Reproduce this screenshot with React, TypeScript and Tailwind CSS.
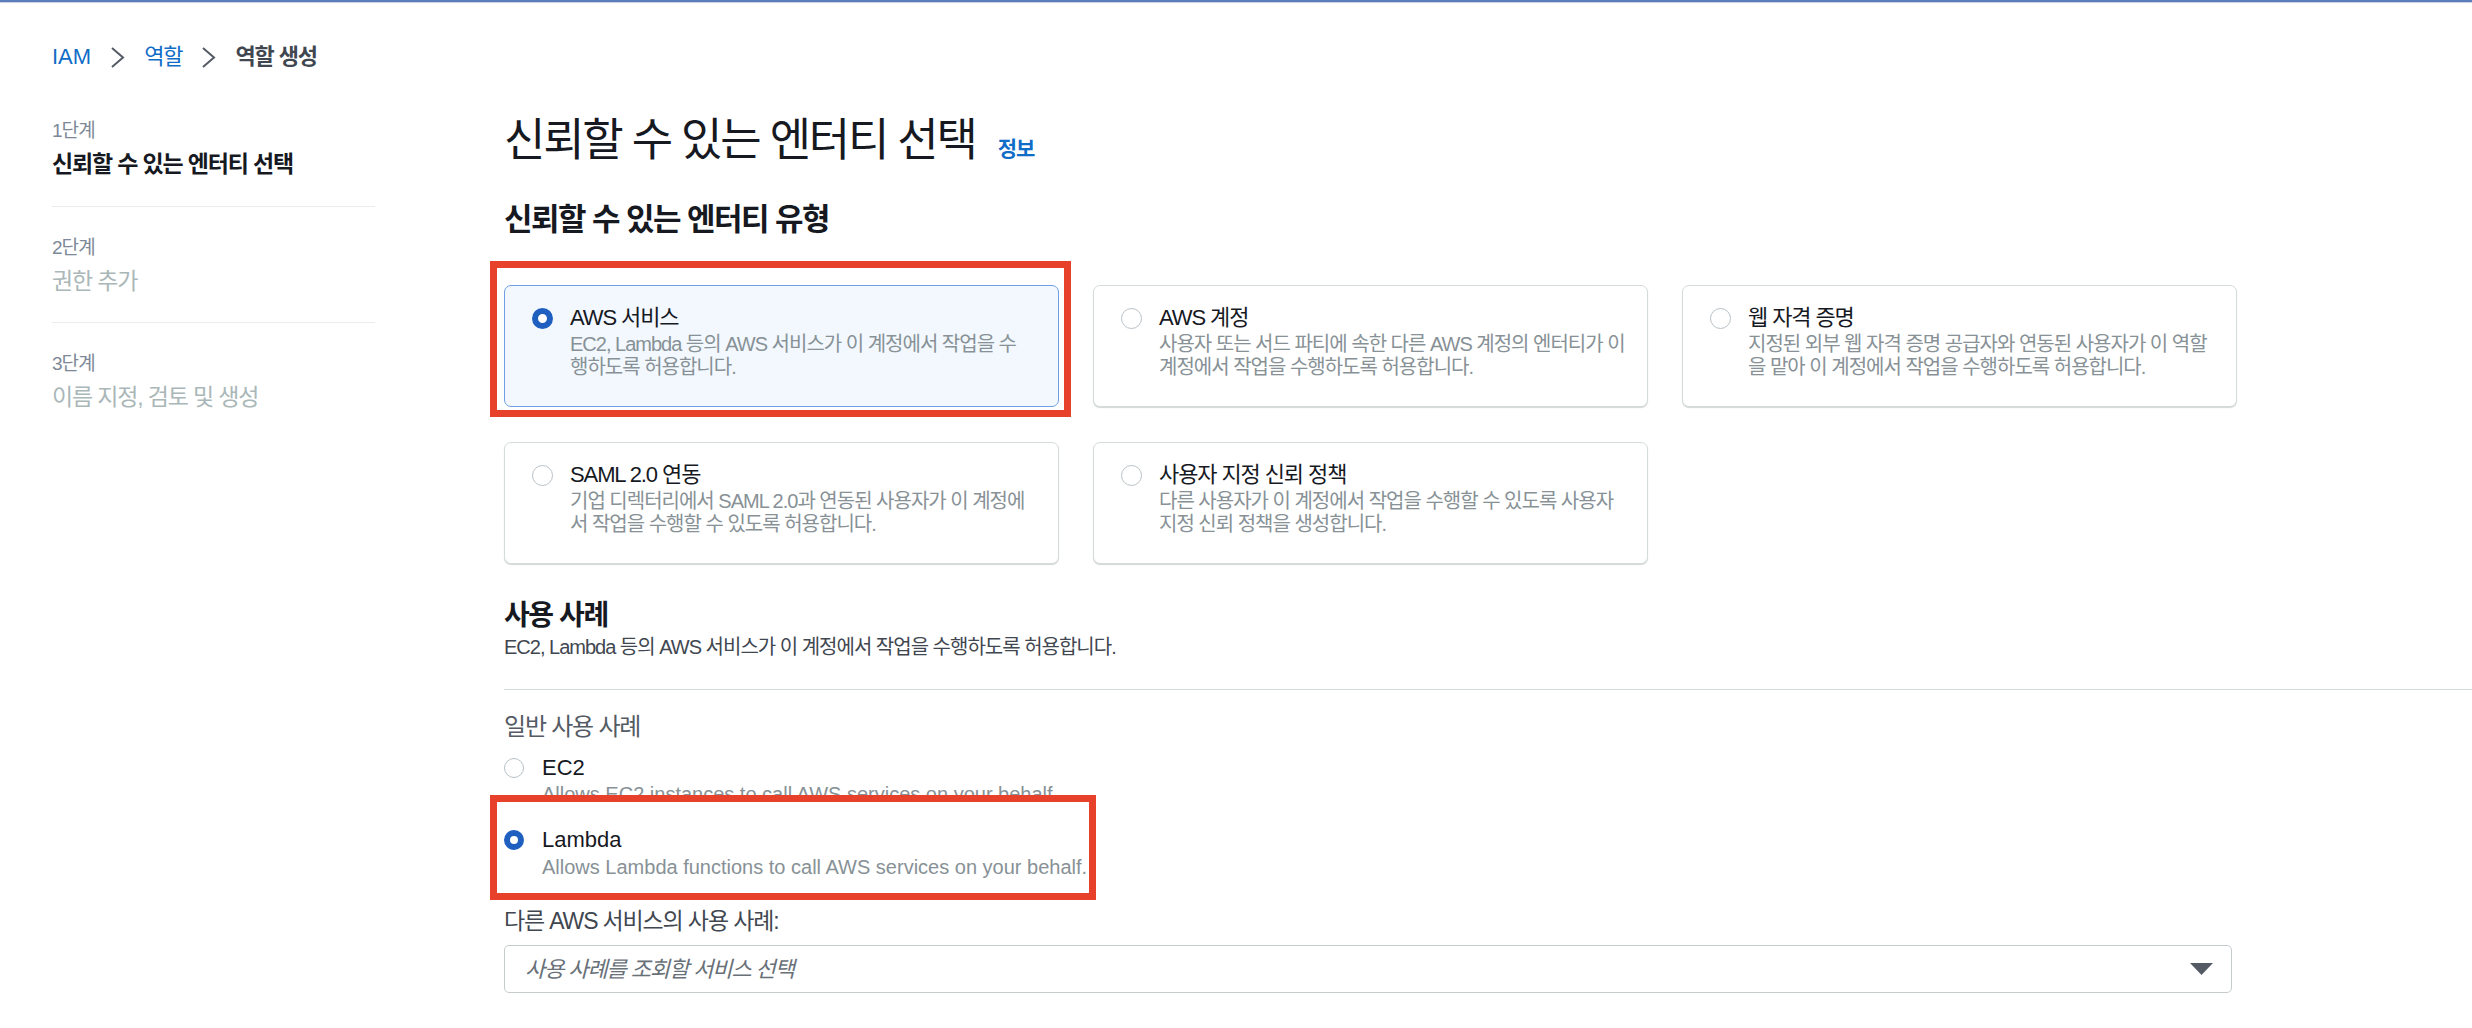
const cards = [
  {
    title: 'AWS 서비스',
    lines: ['EC2, Lambda 등의 AWS 서비스가 이 계정에서 작업을 수', '행하도록 허용합니다.'],
    selected: true,
  },
  {
    title: 'AWS 계정',
    lines: ['사용자 또는 서드 파티에 속한 다른 AWS 계정의 엔터티가 이', '계정에서 작업을 수행하도록 허용합니다.'],
  },
  {
    title: '웹 자격 증명',
    lines: ['지정된 외부 웹 자격 증명 공급자와 연동된 사용자가 이 역할', '을 맡아 이 계정에서 작업을 수행하도록 허용합니다.'],
  },
  {
    title: 'SAML 2.0 연동',
    lines: ['기업 디렉터리에서 SAML 2.0과 연동된 사용자가 이 계정에', '서 작업을 수행할 수 있도록 허용합니다.'],
  },
  {
    title: '사용자 지정 신뢰 정책',
    lines: ['다른 사용자가 이 계정에서 작업을 수행할 수 있도록 사용자', '지정 신뢰 정책을 생성합니다.'],
  },
];

const steps = [
  { label: '1단계', name: '신뢰할 수 있는 엔터티 선택', active: true },
  { label: '2단계', name: '권한 추가' },
  { label: '3단계', name: '이름 지정, 검토 및 생성' },
];

function Radio({ checked, size }: { checked?: boolean; size: 'card' | 'list' }) {
  const dim = size === 'card' ? 'w-[21px] h-[21px] mt-[4.5px]' : 'w-[20px] h-[20px] mt-[4px]';
  return (
    <span
      className={
        'block shrink-0 rounded-full bg-white ' +
        dim +
        ' ' +
        (checked ? 'border-[6px] border-[#1f5fbf]' : 'border-[1.5px] border-[#b8c1c6]')
      }
    />
  );
}

function Chevron() {
  return (
    <svg width="15" height="23" viewBox="0 0 15 23" className="mx-[19px]">
      <polyline points="2,2 13,11.5 2,21" fill="none" stroke="#545b64" strokeWidth="2" />
    </svg>
  );
}

export default function App() {
  return (
    <div className="min-h-screen bg-white text-[#16191f] font-['Liberation_Sans','Noto_Sans_CJK_KR',sans-serif]">
      <div className="h-[2px] bg-[#5b7db9]" />
      <div className="h-px bg-[#c9d3e3]" />

      {/* breadcrumb */}
      <nav className="mt-[39px] pl-[52px] h-[30px] flex items-center text-[22px] leading-[30px] tracking-[-0.05em]">
        <span className="text-[#0f6cc7] tracking-normal">IAM</span>
        <Chevron />
        <span className="text-[#0f6cc7]">역할</span>
        <Chevron />
        <span className="text-[#414750] font-bold">역할 생성</span>
      </nav>

      <div className="flex mt-[40px]">
        <aside className="ml-[52px] w-[323px] shrink-0 pt-[6px]">
          {steps.map((s, i) => (
            <div key={s.label} className={(i > 0 ? 'pt-[28px] ' : '') + (i < 2 ? 'pb-[26px] border-b border-[#eaeded]' : '')}>
              <div className="text-[19px] leading-[26px] text-[#7d8998] tracking-[-0.05em]">{s.label}</div>
              {s.active ? (
                <div className="mt-[5px] text-[23px] leading-[30px] font-bold text-[#16191f] tracking-[-0.05em] pb-px">{s.name}</div>
              ) : (
                <div className="mt-[5px] text-[23px] leading-[30px] text-[#aab7b8] tracking-[-0.05em]">{s.name}</div>
              )}
            </div>
          ))}
        </aside>

        <main className="ml-[129px] flex-1 min-w-0">
          <div className="flex items-baseline gap-[22px] pt-[3px]">
            <h1 className="text-[45px] leading-[52px] font-normal tracking-[-0.05em]">신뢰할 수 있는 엔터티 선택</h1>
            <a className="text-[21px] font-bold text-[#0f6cc7] tracking-[-0.05em]">정보</a>
          </div>

          <h2 className="mt-[35px] text-[31px] leading-[36px] font-bold tracking-[-0.05em]">신뢰할 수 있는 엔터티 유형</h2>

          <div className="mt-[47px] w-[1733px] grid grid-cols-3 gap-x-[34px] gap-y-[35px]">
            {cards.map(c => (
              <div
                key={c.title}
                className={
                  'relative flex gap-[17px] rounded-[7px] border pt-[17px] pb-[27px] pl-[27px] pr-[12px] ' +
                  (c.selected
                    ? 'border-[#6f9fe2] bg-[#f2f8fe]'
                    : 'border-[#d5dbdb] bg-white shadow-[0_1px_1px_0_rgba(0,28,36,0.18)]')
                }
              >
                {c.selected && (
                  <div className="absolute -top-[25px] -left-[15px] -right-[13px] -bottom-[11px] border-[7px] border-[#e8412b] pointer-events-none" />
                )}
                <Radio checked={c.selected} size="card" />
                <div>
                  <div className="text-[22px] leading-[30px] tracking-[-0.05em]">{c.title}</div>
                  <div className="text-[20px] leading-[23px] text-[#879196] tracking-[-0.05em]">
                    {c.lines.map(l => (
                      <div key={l} className="whitespace-nowrap">{l}</div>
                    ))}
                  </div>
                </div>
              </div>
            ))}
          </div>

          <h2 className="mt-[34px] text-[28px] leading-[36px] font-bold tracking-[-0.05em]">사용 사례</h2>
          <p className="text-[20px] leading-[26px] text-[#414750] tracking-[-0.05em]">
            EC2, Lambda 등의 AWS 서비스가 이 계정에서 작업을 수행하도록 허용합니다.
          </p>

          <div className="mt-[29px] h-px bg-[#d5dbdb]" />

          <div className="mt-[23px] text-[24px] leading-[28px] text-[#545b64] tracking-[-0.05em]">일반 사용 사례</div>

          <div className="mt-[13px] flex gap-[18px]">
            <Radio size="list" />
            <div>
              <div className="text-[22px] leading-[28px]">EC2</div>
              <div className="text-[20px] leading-[24px] text-[#879196]">Allows EC2 instances to call AWS services on your behalf.</div>
            </div>
          </div>

          <div className="relative mt-[20px] flex gap-[18px]">
            <div className="absolute -top-[31px] -left-[14px] w-[606px] h-[105px] border-[7px] border-[#e8412b] bg-white" />
            <div className="relative z-10 flex gap-[18px]">
              <Radio checked size="list" />
              <div>
                <div className="text-[22px] leading-[28px]">Lambda</div>
                <div className="text-[20px] leading-[26px] text-[#879196]">Allows Lambda functions to call AWS services on your behalf.</div>
              </div>
            </div>
          </div>

          <div className="mt-[26px] text-[23px] leading-[30px] text-[#414750] tracking-[-0.05em]">다른 AWS 서비스의 사용 사례:</div>

          <div className="mt-[9px] w-[1728px] h-[48px] rounded-[5px] border border-[#c6cbce] flex items-center justify-between pl-[20px] pr-[18px]">
            <span className="italic text-[22px] text-[#687078] tracking-[-0.05em]">사용 사례를 조회할 서비스 선택</span>
            <svg width="23" height="12" viewBox="0 0 23 12">
              <polygon points="0,0 23,0 11.5,12" fill="#545b64" />
            </svg>
          </div>
        </main>
      </div>
    </div>
  );
}
